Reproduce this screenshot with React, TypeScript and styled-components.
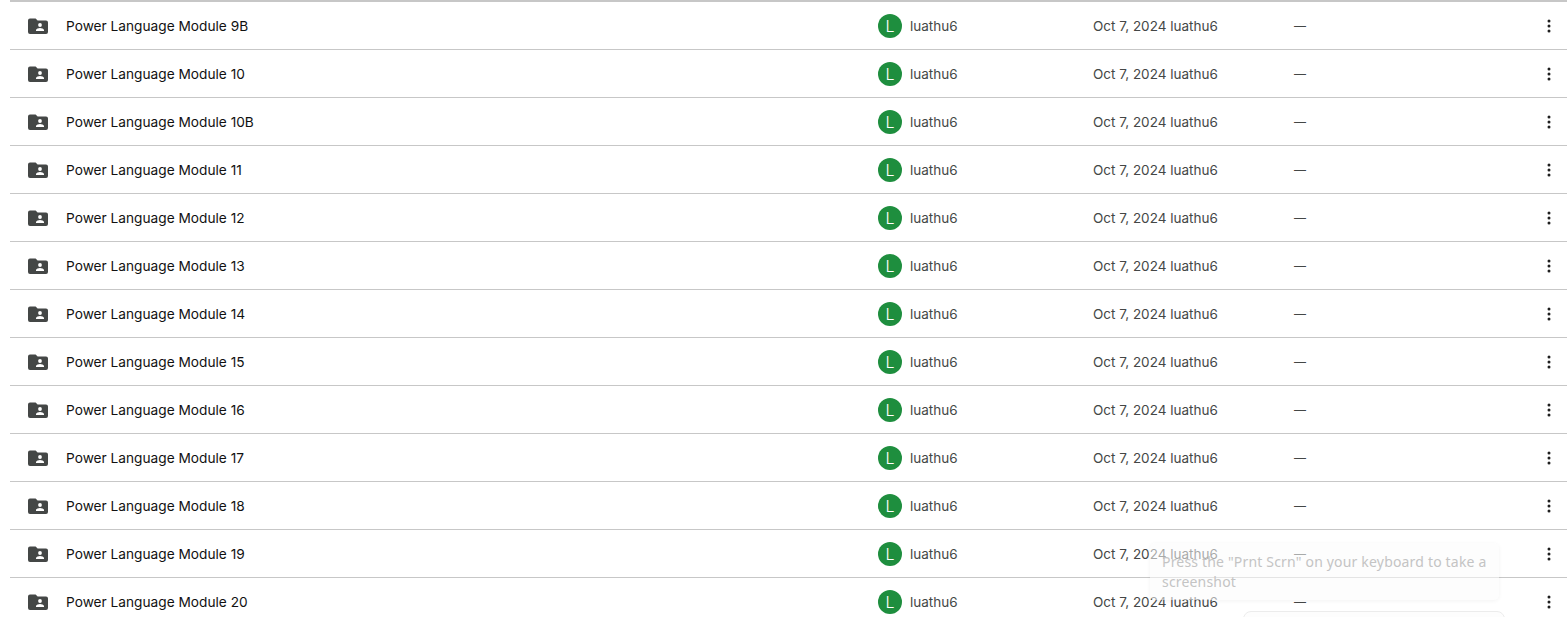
import React from "react";
import styled, { createGlobalStyle } from "styled-components";

const GlobalStyle = createGlobalStyle`
  html, body {
    margin: 0;
    padding: 0;
    height: 100%;
    overflow: hidden;
    background: #fff;
  }
`;

const MODULES = ["9B", "10", "10B", "11", "12", "13", "14", "15", "16", "17", "18", "19", "20"];

const Page = styled.main`
  position: relative;
  height: 617px;
  overflow: hidden;
  padding-left: 10px;
  font-family: Inter, Roboto, "Liberation Sans", sans-serif;
  font-size: 13.5px;
  &::before {
    content: "";
    position: absolute;
    top: 0;
    left: 10px;
    right: 0;
    height: 2px;
    background: #c7c7c7;
  }
`;

const List = styled.div`
  padding-top: 2px;
`;

const Row = styled.div`
  display: grid;
  grid-template-columns: 868px 215px 201px 1fr auto;
  align-items: center;
  height: 47px;
  border-bottom: 1px solid #c7c7c7;
`;

const NameCell = styled.div`
  display: flex;
  align-items: center;
  gap: 18px;
  padding-left: 18px;
  color: #111;
  font-size: 13.7px;
  font-weight: 420;
`;

const OwnerCell = styled.div`
  display: flex;
  align-items: center;
  gap: 8px;
  color: #444746;
`;

const Avatar = styled.span`
  display: flex;
  align-items: center;
  justify-content: center;
  width: 24px;
  height: 24px;
  border-radius: 50%;
  background: #1e8e3e;
  color: #fff;
  font-size: 16px;
  font-weight: 300;
`;

const Cell = styled.div`
  color: #444746;
`;

const Dash = styled(Cell)`
  font-size: 12px;
`;

const Actions = styled.div`
  display: flex;
  justify-content: flex-end;
  padding-right: 9px;
`;

const Toast = styled.div`
  position: absolute;
  left: 1150px;
  top: 543px;
  box-sizing: border-box;
  width: 349px;
  height: 57px;
  padding: 9px 12px;
  border-radius: 5px;
  background: rgba(252, 252, 252, 0.55);
  box-shadow: 0 1px 4px rgba(0, 0, 0, 0.05);
  color: #c4c4c4;
  font-family: "Noto Sans", sans-serif;
  font-size: 14px;
  line-height: 20px;
  letter-spacing: 0.18px;
`;

const Prompt = styled.div`
  position: absolute;
  left: 1243px;
  top: 611px;
  width: 260px;
  height: 40px;
  border: 1px solid #ececec;
  border-radius: 8px;
  background: #fdfdfd;
`;

const SharedFolderIcon = () => (
  <svg width="20" height="20" viewBox="0 0 20 20" aria-hidden="true">
    <path
      fill="#444746"
      d="M2 2.5h5.6l2 2H18a2 2 0 0 1 2 2V16a2 2 0 0 1-2 2H2a2 2 0 0 1-2-2V4.5a2 2 0 0 1 2-2z"
    />
    <circle cx="12" cy="9" r="1.9" fill="#fff" />
    <path fill="#fff" d="M8 15v-1.1c0-1.3 2.7-2 4-2s4 .7 4 2V15z" />
  </svg>
);

const MoreIcon = () => (
  <svg width="18" height="18" viewBox="0 0 18 18" aria-hidden="true">
    <circle cx="9" cy="4" r="1.5" fill="#1f1f1f" />
    <circle cx="9" cy="9" r="1.5" fill="#1f1f1f" />
    <circle cx="9" cy="14" r="1.5" fill="#1f1f1f" />
  </svg>
);

export default function App() {
  return (
    <Page>
      <GlobalStyle />
      <List>
        {MODULES.map((id) => (
          <Row key={id}>
            <NameCell>
              <SharedFolderIcon />
              <span>Power Language Module {id}</span>
            </NameCell>
            <OwnerCell>
              <Avatar>L</Avatar>
              <span>luathu6</span>
            </OwnerCell>
            <Cell>Oct 7, 2024 luathu6</Cell>
            <Dash>—</Dash>
            <Actions>
              <MoreIcon />
            </Actions>
          </Row>
        ))}
      </List>
      <Toast>Press the "Prnt Scrn" on your keyboard to take a screenshot</Toast>
      <Prompt />
    </Page>
  );
}
